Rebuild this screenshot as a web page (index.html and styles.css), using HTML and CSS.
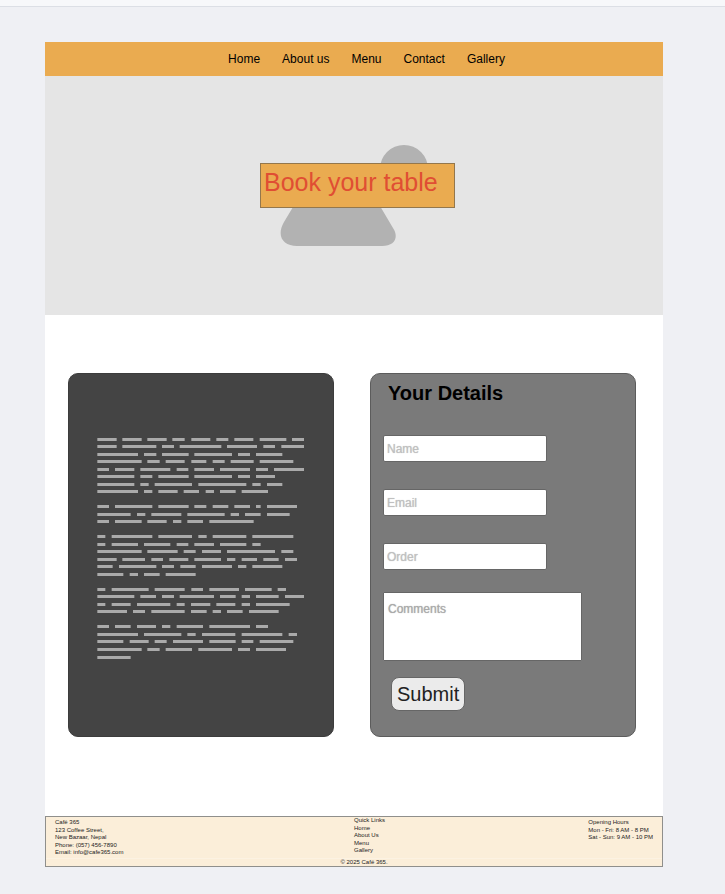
FILE: index.html
```html
<!DOCTYPE html>
<html lang="en">
<head>
<meta charset="utf-8">
<meta name="viewport" content="width=device-width, initial-scale=1">
<title>Café 365</title>
<link rel="stylesheet" href="styles.css">
</head>
<body>
<div class="strip"></div>
<div class="page">
  <nav class="nav">
    <a href="#home">Home</a>
    <a href="#about">About us</a>
    <a href="#menu">Menu</a>
    <a href="#contact">Contact</a>
    <a href="#gallery">Gallery</a>
  </nav>

  <header class="hero">
    <svg class="hero-art" width="148" height="101" viewBox="0 0 148 101" aria-hidden="true">
      <circle cx="124" cy="24" r="24"/>
      <path d="M13 62 L4 77 C-4 91 3 101 17 101 H102 C115 101 119 92 113 83 L100 61 Z"/>
    </svg>
    <h1 class="hero-title">Book your table</h1>
  </header>

  <main class="content">
    <section class="card about">
      <svg class="copy" viewBox="111 36 624 669" aria-hidden="true"><path id="copy-lines"/></svg>
    </section>

    <form class="card details">
      <h2>Your Details</h2>
      <input type="text" aria-label="Name" placeholder="Name">
      <input type="email" aria-label="Email" placeholder="Email">
      <input type="text" aria-label="Order" placeholder="Order">
      <textarea aria-label="Comments" placeholder="Comments"></textarea>
      <button type="button">Submit</button>
    </form>
  </main>

  <footer class="footer">
    <div class="footer-columns">
      <address>Café 365<br>123 Coffee Street,<br>New Bazaar, Nepal<br>Phone: (057) 456-7890<br>Email: info@cafe365.com</address>
      <div class="links">
        <span>Quick Links</span>
        <a href="#home">Home</a>
        <a href="#about">About Us</a>
        <a href="#menu">Menu</a>
        <a href="#gallery">Gallery</a>
      </div>
      <div class="hours">Opening Hours<br>Mon - Fri: 8 AM - 8 PM<br>Sat - Sun: 9 AM - 10 PM</div>
    </div>
    <p class="copyright">© 2025 Café 365.</p>
  </footer>
</div>
<script src="copy.js"></script>
</body>
</html>
```

FILE: copy.js
```js
// Each row: top of the line, then start/end pairs of its word bars.
const rows = [
  [39, 111,171,186,246,261,321,336,375,393,452,468,506,522,581,598,680,695,733],
  [60, 111,171,186,290,305,343,358,485,500,592,609,646,663,733],
  [84, 111,235,251,290,305,387,402,517,533,571,587,668],
  [105, 111,246,261,300,316,375,393,440,457,495,511,582,598,701],
  [129, 111,148,164,224,240,332,349,386,402,463,479,571,587,625,641,733],
  [150, 111,224,240,278,294,387,402,517,533,571,587,646],
  [174, 111,224,240,267,283,397,414,560,576,603,620,668],
  [195, 111,235,251,278,294,354,370,418,436,463,479,528,544,625],
  [240, 111,148,164,278,294,387,402,440,457,506,522,571,587,603,620,712],
  [264, 111,213,230,257,273,365,381,495,511,538,554,603,620,690],
  [285, 111,148,164,246,261,321,338,365,381,430,447,582],
  [330, 111,137,154,278,294,397,414,441,457,560,576,701],
  [354, 111,137,154,235,251,332,349,386,402,463,479,560,576,603],
  [375, 111,246,261,354,370,408,425,484,500,646,663,701],
  [399, 111,171,186,256,273,310,327,386,402,484,500,527,544,592,609,657,674,712],
  [420, 111,159,176,290,305,343,360,408,425,517,533,560,576,668],
  [444, 111,191,208,235,251,300,316,408],
  [489, 111,137,154,267,283,375,393,430,447,538,554,636,652,679],
  [510, 111,224,240,289,305,343,358,463,479,528,544,571,587,657,674,733],
  [534, 111,137,154,213,230,332,349,375,392,452,468,527,544,571,587,690],
  [555, 111,202,218,256,273,375,392,441,457,484,500,549,566,657],
  [600, 111,148,164,213,230,289,305,332,349,430,447,571,587,625],
  [624, 111,235,251,365,381,408,425,527,544,668,685,712],
  [645, 111,191,208,267,283,321,338,430,447,528,544,581,598,701],
  [669, 111,246,261,300,316,397,414,517,533,571,587,679],
  [693, 111,213]
];
let d = "";
for (const [top, ...xs] of rows) {
  for (let i = 0; i < xs.length; i += 2) {
    d += `M${xs[i] + 1} ${top}H${xs[i + 1] - 1}v9H${xs[i] + 1}z`;
  }
}
document.getElementById("copy-lines").setAttribute("d", d);
```

FILE: styles.css
```css
* {
  box-sizing: border-box;
}

body {
  margin: 0;
  background: #eff0f4;
  color: #000;
  font-family: "Liberation Sans", Arial, sans-serif;
  font-size: 12px;
}

a {
  color: inherit;
  text-decoration: none;
}

.strip {
  height: 7px;
  background: #f7f8fa;
  border-bottom: 1px solid #dcdfe5;
}

.page {
  margin: 35px 62px 27px 45px;
  background: #fff;
}

.nav {
  display: flex;
  justify-content: center;
  gap: 22px;
  padding: 9px 0 9px 25px;
  background: #eaab50;
  line-height: 16px;
}

.hero {
  display: grid;
  place-items: center;
  padding: 69px 0;
  background: #e5e5e5;
}

.hero-art,
.hero-title {
  grid-area: 1 / 1;
}

.hero-art {
  display: block;
  fill: #b2b2b2;
}

.hero-title {
  width: 195px;
  margin: 0 0 20px 7px;
  padding: 4px 3px 10px;
  border: 1px solid #94774c;
  background: #eaab50;
  color: #e04e33;
  font-size: 25px;
  font-weight: 400;
  line-height: 29px;
}

.content {
  display: grid;
  grid-template-columns: 1fr 1fr;
  gap: 36px;
  padding: 58px 27px 79px 23px;
}

.card {
  border: 1px solid #5c5c5c;
  border-radius: 10px;
}

.about {
  display: flex;
  align-items: center;
  padding: 0 28px 14px;
  border-color: #3c3c3c;
  background: #444;
}

.copy {
  width: 100%;
  max-width: 208px;
  fill: #aaa;
}

.details {
  display: flex;
  flex-direction: column;
  align-items: flex-start;
  padding: 7px 12px 25px;
  background: #7a7a7a;
}

.details h2 {
  margin: 0 0 30px 5px;
  font-size: 20px;
  line-height: 24px;
}

.details input,
.details textarea {
  display: block;
  width: 164px;
  margin: 0 0 27px;
  padding: 0 3px;
  border: 1px solid #666;
  border-radius: 2px;
  background: #fff;
  font: inherit;
}

.details input {
  height: 27px;
}

.details textarea {
  width: 199px;
  height: 69px;
  margin: -5px 0 16px;
  padding: 8px 4px;
  border-radius: 1px;
  line-height: 16px;
  resize: none;
}

.details ::placeholder {
  color: #c0c0c0;
  opacity: 1;
  text-shadow: 0 0 1px #c0c0c0;
}

.details textarea::placeholder {
  color: #aaa;
  text-shadow: 0 0 1px #aaa;
}

.details button {
  margin-left: 8px;
  padding: 4px 5px;
  border: 1px solid #666;
  border-radius: 8px;
  background: #ebebeb;
  color: #222;
  font: inherit;
  font-size: 20px;
  line-height: 24px;
}

.footer {
  border: 1px solid #8f8f8c;
  background: #fbeed9;
  color: #222;
  font-size: 6px;
  line-height: 1.25;
}

.footer-columns {
  display: flex;
  padding: 0 9px;
  border-bottom: 1px solid #fcf2e2;
}

.footer address {
  flex: 0 0 50%;
  padding: 2px 0 1px;
  font-style: normal;
}

.links {
  display: flex;
  flex: 1;
  flex-direction: column;
}

.hours {
  padding-top: 2px;
}

.copyright {
  margin: 0;
  padding-left: 20px;
  text-align: center;
}
```
